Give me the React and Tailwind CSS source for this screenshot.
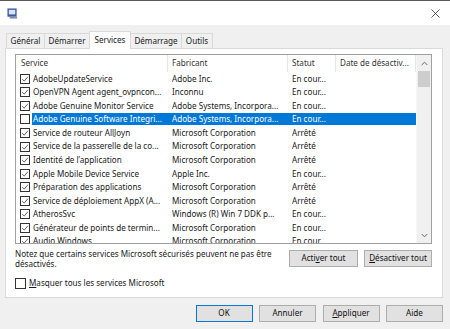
import React from 'react';

const rows = [
  { on: true, name: 'AdobeUpdateService', maker: 'Adobe Inc.', state: 'En cour...' },
  { on: true, name: 'OpenVPN Agent agent_ovpncon...', maker: 'Inconnu', state: 'En cour...' },
  { on: true, name: 'Adobe Genuine Monitor Service', maker: 'Adobe Systems, Incorpora...', state: 'En cour...' },
  { on: false, name: 'Adobe Genuine Software Integri...', maker: 'Adobe Systems, Incorpora...', state: 'En cour...', sel: true },
  { on: true, name: 'Service de routeur AllJoyn', maker: 'Microsoft Corporation', state: 'Arrêté' },
  { on: true, name: 'Service de la passerelle de la co...', maker: 'Microsoft Corporation', state: 'Arrêté' },
  { on: true, name: 'Identité de l’application', maker: 'Microsoft Corporation', state: 'Arrêté' },
  { on: true, name: 'Apple Mobile Device Service', maker: 'Apple Inc.', state: 'En cour...' },
  { on: true, name: 'Préparation des applications', maker: 'Microsoft Corporation', state: 'Arrêté' },
  { on: true, name: 'Service de déploiement AppX (A...', maker: 'Microsoft Corporation', state: 'Arrêté' },
  { on: true, name: 'AtherosSvc', maker: 'Windows (R) Win 7 DDK p...', state: 'En cour...' },
  { on: true, name: 'Générateur de points de termin...', maker: 'Microsoft Corporation', state: 'En cour...' },
  { on: true, name: 'Audio Windows', maker: 'Microsoft Corporation', state: 'En cour...' },
];

const tabs = [
  { label: 'Général', w: 'w-[39px]' },
  { label: 'Démarrer', w: 'w-[46px]' },
  { label: 'Services', w: 'w-[42px]', active: true },
  { label: 'Démarrage', w: 'w-[52px]' },
  { label: 'Outils', w: 'w-[32px]' },
];

function Check({ on, size = 'w-[10px] h-[10px]' }) {
  return (
    <div className={`${size} shrink-0 border border-[#333333] bg-white flex items-center justify-center`}>
      {on && (
        <svg viewBox="0 0 10 10" className="w-[8px] h-[8px]">
          <path d="M1.5 5.2 L4 7.6 L8.6 2.2" fill="none" stroke="#222" strokeWidth="0.9" />
        </svg>
      )}
    </div>
  );
}

function Btn({ children, className = '' }) {
  return (
    <div className={`h-[17px] flex items-center justify-center bg-[#e1e1e1] border border-[#adadad] text-[#111] ${className}`}>
      {children}
    </div>
  );
}

export default function App() {
  return (
    <div
      className="w-[450px] h-[329px] overflow-hidden bg-[#f0f0f0] flex flex-col text-[8.1px] text-[#1a1a1a]"
      style={{ fontFamily: '"Noto Sans", "Open Sans", sans-serif' }}
    >
      {/* title bar */}
      <div className="h-[25px] shrink-0 bg-white border-t border-[#5a5a5a] flex items-center justify-between pl-[7px] pr-[10px]">
        <svg viewBox="0 0 12 12" className="w-[11px] h-[11px]">
          <rect x="0.5" y="0.5" width="10" height="9" fill="#3d5a9e" />
          <rect x="2" y="2" width="7" height="5" fill="#d8e4f5" />
          <rect x="3" y="9.5" width="8" height="2" fill="#7d8db8" />
        </svg>
        <svg viewBox="0 0 10 10" className="w-[9px] h-[9px]">
          <path d="M0.5 0.5 L9.5 9.5 M9.5 0.5 L0.5 9.5" stroke="#333" strokeWidth="0.9" />
        </svg>
      </div>

      <div className="pl-[5px] pr-[7px] pt-[6px] flex flex-col">
        {/* tabs */}
        <div className="h-[17px] flex items-end pl-[1px]">
          {tabs.map((t, i) => (
            <div
              key={t.label}
              className={`${t.w} ${i > 0 ? '-ml-px' : ''} flex items-center justify-center border border-b-0 border-[#d9d9d9] ${
                t.active ? 'h-[18px] bg-white relative z-10 -mb-px' : 'h-[15px] bg-[#f0f0f0]'
              }`}
            >
              {t.label}
            </div>
          ))}
        </div>

        {/* panel */}
        <div className="h-[250px] bg-white border border-[#d9d9d9] pl-[9px] pt-[5px]">
          <div className="w-[417px] h-[190px] border border-[#a0a0a0] flex overflow-hidden">
            <div className="w-[400px] flex flex-col overflow-hidden">
              <div className="h-[17px] shrink-0 flex items-center text-[#333]">
                <div className="w-[152px] pl-[5px] h-full flex items-center border-r border-[#e5e5e5]">Service</div>
                <div className="w-[120px] pl-[4px] h-full flex items-center border-r border-[#e5e5e5]">Fabricant</div>
                <div className="w-[48px] pl-[4px] h-full flex items-center border-r border-[#e5e5e5]">Statut</div>
                <div className="w-[80px] pl-[4px] h-full flex items-center border-r border-[#e5e5e5] whitespace-nowrap">Date de désactiv...</div>
              </div>
              {rows.map((r) => (
                <div key={r.name} className="h-[13.56px] shrink-0 flex items-center whitespace-nowrap">
                  <div className="w-[16px] pl-[4px] shrink-0">
                    <Check on={r.on} />
                  </div>
                  <div className={`flex-1 h-[12px] flex items-center ${r.sel ? 'bg-[#0078d7] text-white' : ''}`}>
                    <div className="w-[140px] pl-[1px] overflow-hidden">{r.name}</div>
                    <div className="w-[120px] pl-[0px] overflow-hidden">{r.maker}</div>
                    <div className="w-[48px] pl-[0px] overflow-hidden">{r.state}</div>
                  </div>
                </div>
              ))}
            </div>
            {/* scrollbar */}
            <div className="w-[15px] bg-[#f0f0f0] flex flex-col border-l border-[#f7f7f7]">
              <div className="h-[16px] flex items-center justify-center">
                <svg viewBox="0 0 8 5" className="w-[7px] h-[5px]">
                  <path d="M0.8 4.2 L4 1 L7.2 4.2" fill="none" stroke="#606060" strokeWidth="1.1" />
                </svg>
              </div>
              <div className="h-[16px] mx-[1px] bg-[#cdcdcd]" />
              <div className="flex-1" />
              <div className="h-[15px] flex items-center justify-center">
                <svg viewBox="0 0 8 5" className="w-[7px] h-[5px]">
                  <path d="M0.8 0.8 L4 4 L7.2 0.8" fill="none" stroke="#606060" strokeWidth="1.1" />
                </svg>
              </div>
            </div>
          </div>

          <div className="w-[417px] mt-[5px] flex items-start justify-between">
            <p className="w-[268px] leading-[10px]">
              Notez que certains services Microsoft sécurisés peuvent ne pas être désactivés.
            </p>
            <div className="flex gap-[6px] mt-[1px]">
              <Btn className="w-[69px]">
                Acti<span className="underline">v</span>er tout
              </Btn>
              <Btn className="w-[68px]">
                <span className="underline">D</span>ésactiver tout
              </Btn>
            </div>
          </div>

          <div className="mt-[8px] flex items-center gap-[3px]">
            <Check on={false} size="w-[11px] h-[11px]" />
            <span>
              <span className="underline">M</span>asquer tous les services Microsoft
            </span>
          </div>
        </div>

        {/* dialog buttons */}
        <div className="mt-[7px] flex justify-end gap-[6.5px]">
          <Btn className="w-[57px] !border-[#0078d7]">OK</Btn>
          <Btn className="w-[57px]">Annuler</Btn>
          <Btn className="w-[57px]">
            <span className="underline">A</span>ppliquer
          </Btn>
          <Btn className="w-[57px]">Aide</Btn>
        </div>
      </div>
    </div>
  );
}
